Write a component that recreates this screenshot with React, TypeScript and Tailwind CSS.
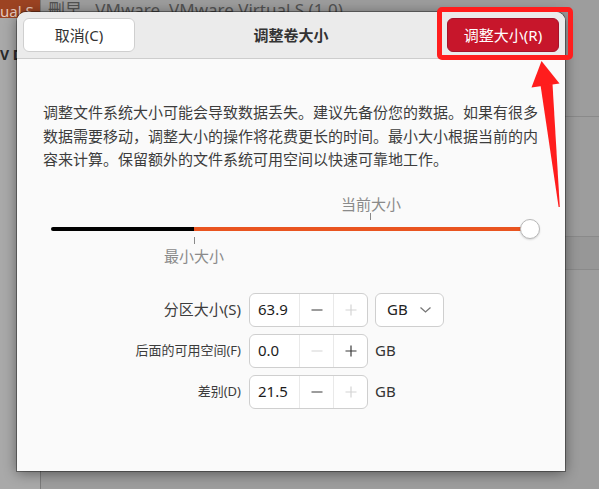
import React from "react";

function Minus({ disabled }: { disabled?: boolean }) {
  return (
    <svg width="12" height="12" viewBox="0 0 12 12">
      <line x1="0.5" y1="6" x2="11.5" y2="6" stroke={disabled ? "#d4d4d4" : "#3a3a3a"} strokeWidth="1.2" />
    </svg>
  );
}

function Plus({ disabled }: { disabled?: boolean }) {
  const c = disabled ? "#d4d4d4" : "#3a3a3a";
  return (
    <svg width="12" height="12" viewBox="0 0 12 12">
      <line x1="0.5" y1="6" x2="11.5" y2="6" stroke={c} strokeWidth="1.2" />
      <line x1="6" y1="0.5" x2="6" y2="11.5" stroke={c} strokeWidth="1.2" />
    </svg>
  );
}

function SpinBox({ value, minusOff, plusOff }: { value: string; minusOff?: boolean; plusOff?: boolean }) {
  return (
    <div className="flex h-[34px] w-[119px] overflow-hidden rounded-[6px] border border-[#cfcfcf] bg-white">
      <div className="flex w-[49px] items-center pl-[8px] text-[15px] text-[#1c1c1c]">{value}</div>
      <div className="flex w-[34px] items-center justify-center border-l border-[#e9e9e9]">
        <Minus disabled={minusOff} />
      </div>
      <div className="flex flex-1 items-center justify-center border-l border-[#e9e9e9]">
        <Plus disabled={plusOff} />
      </div>
    </div>
  );
}

function Row({ label, big, children }: { label: string; big?: boolean; children: React.ReactNode }) {
  return (
    <div className="flex h-[34px] items-center">
      <div className={`w-[199px] pr-[1px] text-right text-[#3c3c3c] ${big ? "text-[15px]" : "text-[13px]"}`}>{label}</div>
      <div className="ml-[7px] flex items-center">{children}</div>
    </div>
  );
}

export default function App() {
  return (
    <div className="relative h-[489px] w-[599px] overflow-hidden bg-[#9d9d9d] font-['Noto_Sans','Noto_Sans_CJK_SC',sans-serif]">
      {/* background window (dimmed) */}
      <div className="absolute left-0 top-0 h-full w-[41px] border-r border-[#7b7b7b] bg-[#a9a9a9]">
        <div className="h-[18px] overflow-hidden bg-[#9c4322] pl-0 text-[15px] leading-[22px] text-[#e6c9bd]">ual S</div>
        <div className="mt-[26px] text-[14px] font-bold text-[#2a2a2a]">V D</div>
      </div>
      <div className="absolute left-[48px] top-[-1px] whitespace-nowrap text-[17px] leading-[22px] text-[#525252]">
        刪早&nbsp;&nbsp;&nbsp;VMware, VMware Virtual S (1.0)
      </div>
      <div className="absolute left-[565px] right-0 top-[116px] border-t border-[#8a8a8a]" />
      <div className="absolute left-[565px] right-0 top-[236px] h-[34px] border-y border-[#8a8a8a] bg-[#979797]" />

      {/* dialog */}
      <div className="absolute left-[17px] top-[12px] flex h-[459px] w-[548px] flex-col overflow-hidden rounded-t-[9px] bg-[#fafafa] shadow-[0_2px_14px_rgba(0,0,0,0.45),0_0_0_1px_rgba(0,0,0,0.35)]">
        <div className="relative flex h-[47px] shrink-0 items-center justify-between border-b border-[#cdcdcd] bg-[#ebebeb] px-[6px]">
          <button className="flex h-[34px] w-[112px] items-center justify-center rounded-[6px] border border-[#cfcfcf] bg-white text-[15px] text-[#333]">
            取消(C)
          </button>
          <div className="absolute left-0 right-0 top-0 flex h-full items-center justify-center pointer-events-none text-[15px] font-bold text-[#333]">
            调整卷大小
          </div>
          <button className="flex h-[34px] w-[112px] items-center justify-center rounded-[6px] border border-[#a5122a] bg-[#c7162b] text-[15px] text-white">
            调整大小(R)
          </button>
        </div>

        <div className="flex flex-col px-[26px] pt-[42px]">
          <p className="w-[500px] text-[15px] leading-[23.5px] text-[#3d3d3d]">
            调整文件系统大小可能会导致数据丢失。建议先备份您的数据。如果有很多数据需要移动，调整大小的操作将花费更长的时间。最小大小根据当前的内容来计算。保留额外的文件系统可用空间以快速可靠地工作。
          </p>

          {/* slider */}
          <div className="relative ml-[8px] mt-[18px] h-[80px] w-[489px]">
            <div className="absolute left-[290px] top-[5px] w-[60px] text-center text-[15px] leading-[18px] text-[#8a8a8a]">当前大小</div>
            <div className="absolute left-[319px] top-[23px] h-[7px] w-px bg-[#8a8a8a]" />
            <div className="absolute left-0 top-[37px] h-[4px] w-[143px] rounded-l-full bg-black" />
            <div className="absolute left-[143px] top-[37px] h-[4px] w-[336px] bg-[#e95420]" />
            <div className="absolute left-[469px] top-[29px] h-[20px] w-[20px] rounded-full border border-[#b8b8b8] bg-white shadow-[0_1px_2px_rgba(0,0,0,0.15)]" />
            <div className="absolute left-[143px] top-[47px] h-[7px] w-px bg-[#8a8a8a]" />
            <div className="absolute left-[113px] top-[57px] w-[60px] text-center text-[15px] leading-[18px] text-[#8a8a8a]">最小大小</div>
          </div>

          {/* form */}
          <div className="mt-[23px] flex flex-col gap-[7px]">
            <Row label="分区大小(S)" big>
              <SpinBox value="63.9" plusOff />
              <div className="ml-[7px] flex h-[34px] w-[69px] items-center justify-between rounded-[6px] border border-[#cfcfcf] bg-white pl-[11px] pr-[12px] text-[15px] text-[#222]">
                <span>GB</span>
                <svg width="11" height="6" viewBox="0 0 11 6">
                  <polyline points="0.5,0.5 5.5,5 10.5,0.5" fill="none" stroke="#777" strokeWidth="1.3" />
                </svg>
              </div>
            </Row>
            <Row label="后面的可用空间(F)">
              <SpinBox value="0.0" minusOff />
              <span className="ml-[7px] text-[15px] text-[#333]">GB</span>
            </Row>
            <Row label="差别(D)">
              <SpinBox value="21.5" plusOff />
              <span className="ml-[7px] text-[15px] text-[#333]">GB</span>
            </Row>
          </div>
        </div>
      </div>

      {/* red annotation */}
      <div className="absolute left-[437px] top-[7px] h-[53px] w-[136px] rounded-[5px] border-[5px] border-[#ff1d1d]" />
      <svg className="absolute left-0 top-0" width="599" height="489" viewBox="0 0 599 489">
        <polygon points="541.5,61 531.5,87.5 559.5,83.5" fill="#ff1d1d" />
        <polygon points="540.5,85 552.5,84 559.8,207 558.6,207" fill="#ff1d1d" />
      </svg>
    </div>
  );
}
